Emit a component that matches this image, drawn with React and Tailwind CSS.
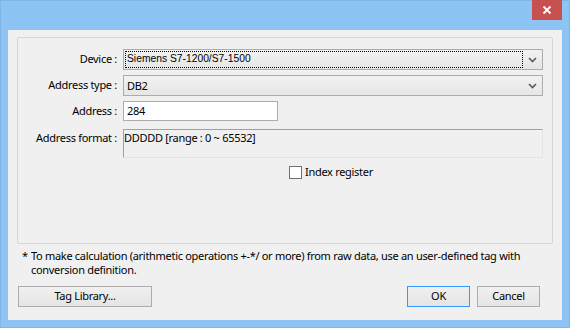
import React from "react";

const Chevron = () => (
  <svg width="9" height="6" viewBox="0 0 9 6" className="block">
    <path d="M1 1 L4.5 4.5 L8 1" fill="none" stroke="#5a5a5a" strokeWidth="1.6" />
  </svg>
);

const Combo = ({ children, focused }) => (
  <div className="h-[21px] w-[420px] border border-[#acacac] bg-gradient-to-b from-[#f2f2f2] to-[#e6e6e6] flex items-center p-[1px]">
    <div
      className={
        "flex-1 h-full flex items-center pl-[1px] " +
        (focused ? "border border-dotted border-black" : "border border-transparent")
      }
    >
      {children}
    </div>
    <div className="w-[18px] h-full flex items-center justify-center">
      <Chevron />
    </div>
  </div>
);

const Label = ({ children }) => (
  <div className="w-[100px] text-right pr-[1px] text-[11px] text-black shrink-0">{children}</div>
);

export default function App() {
  return (
    <div
      className="w-[570px] h-[328px] bg-[#8ec4f4] border border-[#7fb5e8] flex flex-col text-black tracking-[-0.3px]"
      style={{ fontFamily: '"Noto Sans", "Segoe UI", sans-serif' }}
    >
      <div className="h-[29px] flex justify-end items-start pr-[7px] shrink-0">
        <div className="w-[30px] h-[20px] bg-[#c75050] mt-[-1px] flex items-center justify-center">
          <svg width="10" height="10" viewBox="0 0 10 10">
            <path d="M1.5 1.5 L8.5 8.5 M8.5 1.5 L1.5 8.5" stroke="white" strokeWidth="1.8" />
          </svg>
        </div>
      </div>
      <div className="mx-[7px] h-[290px] bg-[#f0f0f0] flex flex-col">
        {/* group box */}
        <div className="mt-[7px] ml-[9px] w-[536px] h-[207px] border border-[#d5d5d5] rounded-[2px] flex flex-col pt-[11px]">
          <div className="flex items-center gap-[5px]">
            <Label>Device :</Label>
            <Combo focused>
              <span className="text-[10.3px] leading-none tracking-normal" style={{ fontFamily: '"Liberation Sans", Arial, sans-serif' }}>
                Siemens S7-1200/S7-1500
              </span>
            </Combo>
          </div>
          <div className="flex items-center gap-[5px] mt-[5px]">
            <Label>Address type :</Label>
            <Combo>
              <span className="text-[11px] leading-none">DB2</span>
            </Combo>
          </div>
          <div className="flex items-center gap-[5px] mt-[5px]">
            <Label>Address :</Label>
            <div className="h-[20px] w-[155px] bg-white border border-[#abadb3] flex items-center pl-[3px] text-[11px]">
              284
            </div>
          </div>
          <div className="flex items-start gap-[5px] mt-[8px]">
            <Label>
              <span className="block mt-[1px]">Address format :</span>
            </Label>
            <div className="h-[29px] w-[420px] border border-t-[#a0a0a0] border-l-[#a0a0a0] border-r-[#e3e3e3] border-b-[#e3e3e3] text-[11px] leading-[14px] pl-[0px] pt-[1px]">
              DDDDD [range : 0 ~ 65532]
            </div>
          </div>
          <div className="flex items-center mt-[6px] ml-[271px]">
            <div className="w-[13px] h-[13px] bg-white border border-[#707070]" />
            <span className="ml-[3px] text-[11px]">Index register</span>
          </div>
        </div>
        {/* footnote */}
        <div className="mt-[5px] ml-[14px] w-[530px] flex text-[11px] leading-[14px]">
          <span className="w-[9px] shrink-0">*</span>
          <span>
            To make calculation (arithmetic operations +-*/ or more) from raw data, use an user-defined tag with
            <br />
            conversion definition.
          </span>
        </div>
        {/* buttons */}
        <div className="mt-auto mb-[13px] ml-[10px] mr-[22px] flex items-center">
          <button className="w-[134px] h-[21px] border border-[#acacac] bg-gradient-to-b from-[#f0f0f0] to-[#e5e5e5] text-[11px]">
            Tag Library...
          </button>
          <div className="flex-1" />
          <button className="w-[63px] h-[21px] border border-[#3399ff] bg-gradient-to-b from-[#f0f0f0] to-[#e5e5e5] text-[11px]">
            OK
          </button>
          <button className="ml-[7px] w-[63px] h-[21px] border border-[#acacac] bg-gradient-to-b from-[#f0f0f0] to-[#e5e5e5] text-[11px]">
            Cancel
          </button>
        </div>
      </div>
    </div>
  );
}
